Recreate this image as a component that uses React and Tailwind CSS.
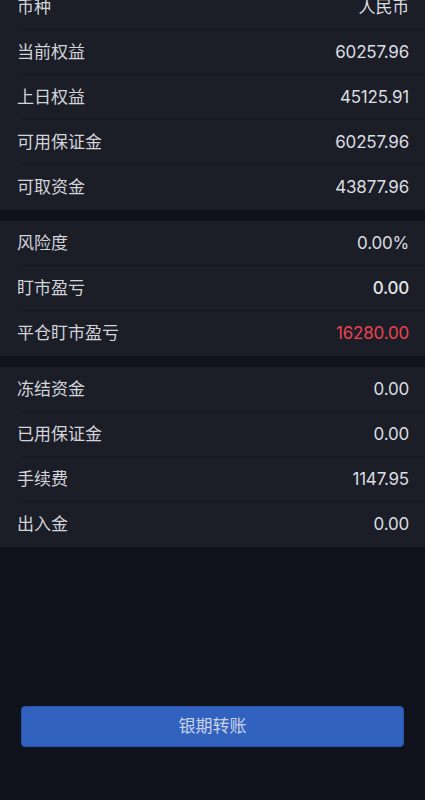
import React from "react";

const sections = [
  [
    { label: "币种", value: "人民币" },
    { label: "当前权益", value: "60257.96" },
    { label: "上日权益", value: "45125.91" },
    { label: "可用保证金", value: "60257.96" },
    { label: "可取资金", value: "43877.96" },
  ],
  [
    { label: "风险度", value: "0.00%" },
    { label: "盯市盈亏", value: "0.00", bold: true },
    { label: "平仓盯市盈亏", value: "16280.00", red: true },
  ],
  [
    { label: "冻结资金", value: "0.00" },
    { label: "已用保证金", value: "0.00" },
    { label: "手续费", value: "1147.95" },
    { label: "出入金", value: "0.00" },
  ],
];

const font = { fontFamily: '"Inter", "Noto Sans CJK SC", sans-serif' };

function Row({ item, last }) {
  return (
    <div className="relative flex h-[45px] items-center justify-between bg-[#1b1d27] pl-[17px] pr-[16px]">
      <span className="text-[17px] text-[#d2d4da]">{item.label}</span>
      <span
        className={
          "text-[17px] tracking-[-0.2px] " +
          (item.red
            ? "text-[#ea4350]"
            : item.bold
            ? "font-medium text-[#e4e5e8]"
            : "text-[#dcdde1]")
        }
      >
        {item.value}
      </span>
      {!last && (
        <div className="absolute bottom-0 left-[22px] right-0 h-px bg-[#161821]" />
      )}
    </div>
  );
}

export default function App() {
  return (
    <div
      className="flex h-[800px] w-full flex-col overflow-hidden bg-[#10131b]"
      style={font}
    >
      <div className="-mt-[15px] flex flex-col gap-[11px]">
        {sections.map((rows, i) => (
          <div key={i} className="flex flex-col">
            {rows.map((r, j) => (
              <Row key={r.label} item={r} last={j === rows.length - 1} />
            ))}
          </div>
        ))}
      </div>

      <div className="mt-auto px-[21px] pb-[53px]">
        <button className="flex h-[41px] w-full items-center justify-center rounded-[4px] border border-[#2b55a8] bg-[#3262c0] text-[17px] text-[#c9d3e6]">
          银期转账
        </button>
      </div>
    </div>
  );
}
